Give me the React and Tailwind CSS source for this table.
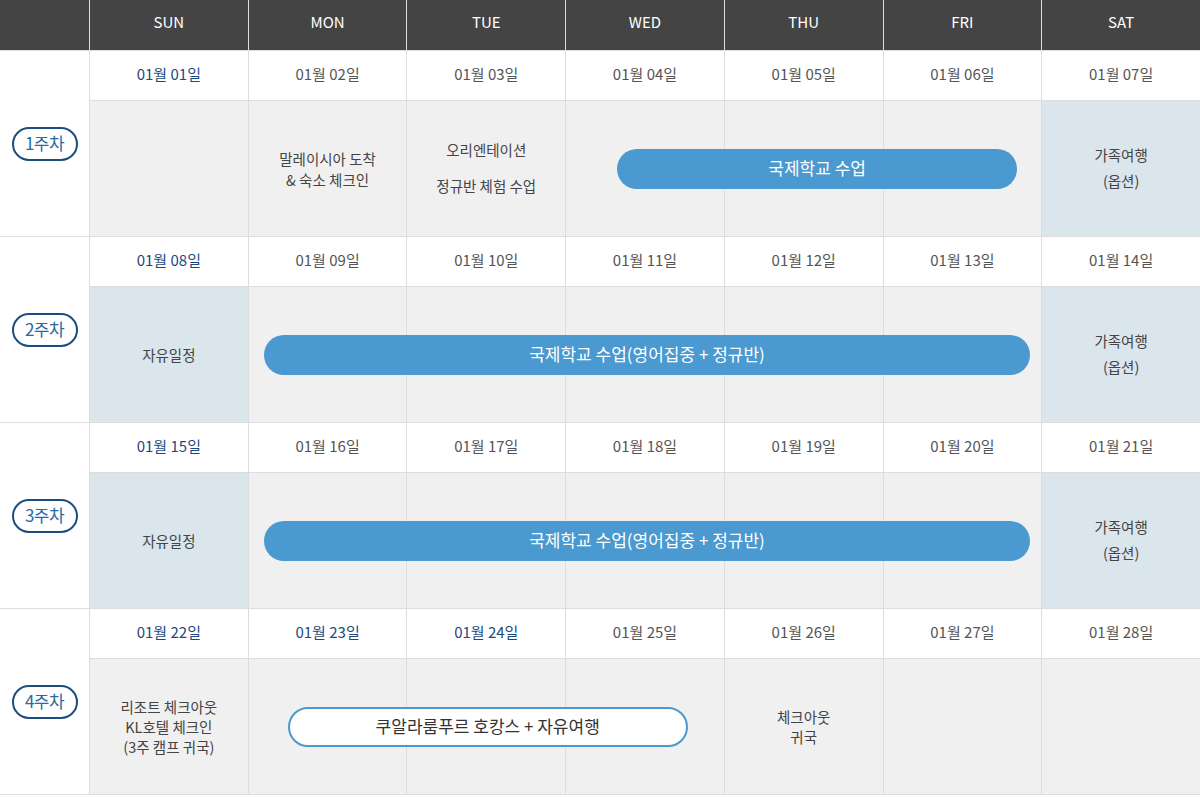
import React from "react";

const FONT = { fontFamily: '"Noto Sans CJK KR", "Noto Sans", sans-serif' };

const days = ["SUN", "MON", "TUE", "WED", "THU", "FRI", "SAT"];
const colStart = ["col-start-2", "col-start-3", "col-start-4", "col-start-5", "col-start-6", "col-start-7", "col-start-8"];

const weeks = [
  {
    label: "1주차",
    dates: ["01", "02", "03", "04", "05", "06", "07"],
    blue: [0],
    bg: ["g", "g", "g", "g", "g", "g", "b"],
    content: [
      null,
      <div className="leading-[21px]">말레이시아 도착<br />&amp; 숙소 체크인</div>,
      <div className="flex flex-col gap-[15px] leading-[21px] -mt-[3px]"><span>오리엔테이션</span><span>정규반 체험 수업</span></div>,
      null,
      null,
      null,
      <div className="flex flex-col gap-[5px] leading-[21px] -mt-[2px]"><span>가족여행</span><span>(옵션)</span></div>,
    ],
    pill: { cls: "col-start-5 col-end-8 ml-[51px] w-[400px]", text: "국제학교 수업", outline: false },
  },
  {
    label: "2주차",
    dates: ["08", "09", "10", "11", "12", "13", "14"],
    blue: [0],
    bg: ["b", "g", "g", "g", "g", "g", "b"],
    content: [
      <div>자유일정</div>,
      null, null, null, null, null,
      <div className="flex flex-col gap-[5px] leading-[21px] -mt-[2px]"><span>가족여행</span><span>(옵션)</span></div>,
    ],
    pill: { cls: "col-start-3 col-end-8 ml-[15px] mr-[11px]", text: "국제학교 수업(영어집중 + 정규반)", outline: false },
  },
  {
    label: "3주차",
    dates: ["15", "16", "17", "18", "19", "20", "21"],
    blue: [0],
    bg: ["b", "g", "g", "g", "g", "g", "b"],
    content: [
      <div>자유일정</div>,
      null, null, null, null, null,
      <div className="flex flex-col gap-[5px] leading-[21px] -mt-[2px]"><span>가족여행</span><span>(옵션)</span></div>,
    ],
    pill: { cls: "col-start-3 col-end-8 ml-[15px] mr-[11px]", text: "국제학교 수업(영어집중 + 정규반)", outline: false },
  },
  {
    label: "4주차",
    dates: ["22", "23", "24", "25", "26", "27", "28"],
    blue: [0, 1, 2],
    bg: ["g", "g", "g", "g", "g", "g", "g"],
    content: [
      <div className="leading-[20px]">리조트 체크아웃<br />KL호텔 체크인<br />(3주 캠프 귀국)</div>,
      null, null, null,
      <div className="leading-[20px]">체크아웃<br />귀국</div>,
      null, null,
    ],
    pill: { cls: "col-start-3 col-end-8 ml-[39px] w-[400px]", text: "쿠알라룸푸르 호캉스 + 자유여행", outline: true },
  },
];

function Week({ w }) {
  return (
    <div className="grid grid-cols-[89px_repeat(7,1fr)] grid-rows-[49px_135px] gap-px bg-[#dddddd]">
      <div className="col-start-1 row-start-1 row-span-2 bg-white flex items-center justify-center">
        <div className="w-[66px] h-[34px] rounded-full border-2 border-[#1d4d7e] flex items-center justify-center text-[17px] text-[#2b6aa0] tracking-[-0.5px] pb-px">
          {w.label}
        </div>
      </div>
      {w.dates.map((d, i) => (
        <div
          key={"d" + i}
          className={`${colStart[i]} row-start-1 bg-white flex items-center justify-center text-[15px] pb-[2px] ${
            w.blue.includes(i) ? "text-[#1b4a80]" : "text-[#555555]"
          }`}
        >
          01월 {d}일
        </div>
      ))}
      {w.content.map((c, i) => (
        <div
          key={"c" + i}
          className={`${colStart[i]} row-start-2 ${
            w.bg[i] === "b" ? "bg-[#dbe5ec]" : "bg-[#f1f0f1]"
          } flex items-center justify-center text-center text-[14.5px] text-[#444444]`}
        >
          {c}
        </div>
      ))}
      <div
        className={`${w.pill.cls} row-start-2 self-center h-[40px] rounded-full flex items-center justify-center text-[17px] z-10 pb-[2px] ${
          w.pill.outline
            ? "bg-white border-2 border-[#4a99d0] text-[#333333]"
            : "bg-[#4a99d0] text-white"
        }`}
      >
        {w.pill.text}
      </div>
    </div>
  );
}

export default function App() {
  return (
    <div style={FONT} className="w-[1200px] bg-white">
      <div className="flex flex-col gap-px bg-[#dddddd] border-b border-[#dddddd]">
        <div className="grid grid-cols-[89px_repeat(7,1fr)] gap-px bg-[#dddddd] h-[50px]">
          <div className="bg-[#444444]" />
          {days.map((d) => (
            <div key={d} className="bg-[#444444] flex items-center justify-center text-white text-[15px] pb-[5px]">
              {d}
            </div>
          ))}
        </div>
        {weeks.map((w) => (
          <Week key={w.label} w={w} />
        ))}
      </div>
    </div>
  );
}
